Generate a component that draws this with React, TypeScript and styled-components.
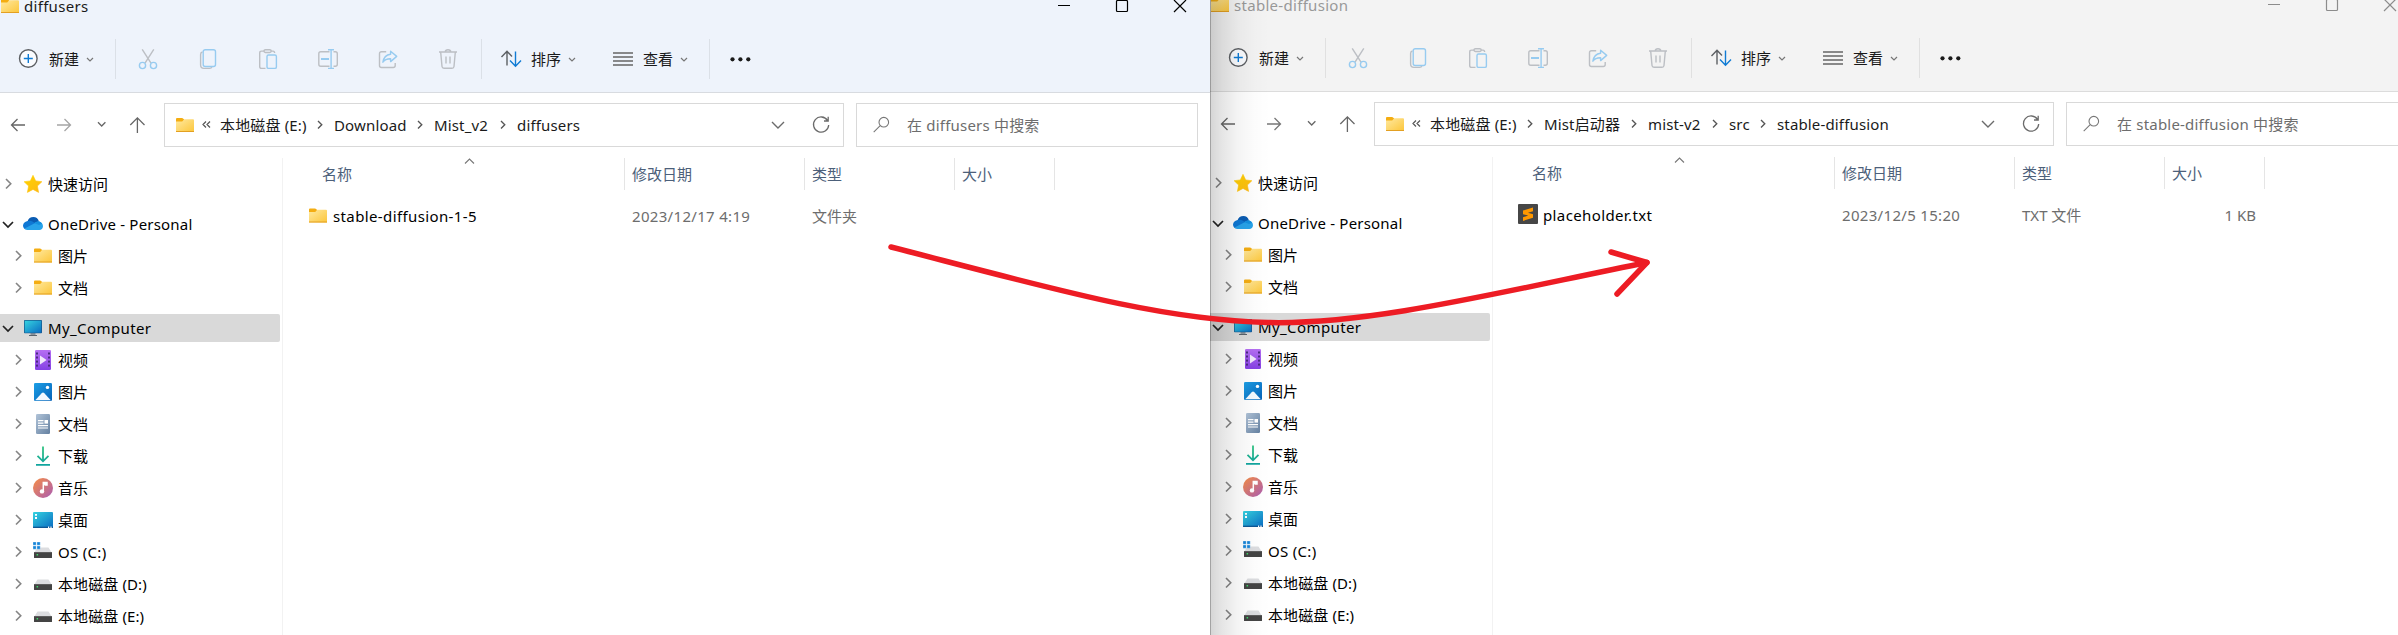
import React from "react";
import styled, { createGlobalStyle, css } from "styled-components";

const Global = createGlobalStyle`
  html, body { margin: 0; height: 635px; overflow: hidden; background: #fff; }
  body { font-family: "Noto Sans", "Noto Sans CJK SC", sans-serif; font-size: 15px; line-height: 20px; color: #000; }
  svg { display: block; flex: none; overflow: visible; }
`;

const Desktop = styled.main`
  position: relative;
  display: flex;
  width: 2398px;
  height: 635px;
  overflow: hidden;
`;

const Window = styled.section<{ $active: boolean }>`
  position: relative;
  flex: none;
  display: flex;
  flex-direction: column;
  width: 1210px;
  height: ${(p) => (p.$active ? 635 : 636)}px;
  margin-top: ${(p) => (p.$active ? 0 : -1)}px;
  background: #fff;
`;

const Shade = styled.div`
  position: absolute;
  inset: 0 auto 0 0;
  width: 60px;
  pointer-events: none;
  background: linear-gradient(90deg, rgba(0,0,0,.36) 0, rgba(0,0,0,.36) 1px, rgba(0,0,0,.16) 1px, rgba(0,0,0,.1) 12px, rgba(0,0,0,.045) 28px, rgba(0,0,0,.012) 45px, transparent 60px);
`;

const Header = styled.header<{ $active: boolean }>`
  flex: none;
  box-sizing: border-box;
  height: 93px;
  border-bottom: 1px solid ${(p) => (p.$active ? "#d8dbe0" : "#dcdcdc")};
  background: ${(p) => (p.$active ? "#eef3fb" : "#f3f3f3")};
`;

const TitleBar = styled.div<{ $active: boolean }>`
  display: flex;
  align-items: center;
  height: 12px;
  padding: 0 24px 0 1px;
  color: ${(p) => (p.$active ? "#1a1a1a" : "#999")};
`;

const Title = styled.span`
  flex: 1;
  margin-left: 5px;
  line-height: 12px;
  letter-spacing: 0.3px;
`;

const Controls = styled.div<{ $active: boolean }>`
  display: flex;
  gap: 46px;
  color: ${(p) => (p.$active ? "#000" : "#8c8c8c")};
`;

const Toolbar = styled.div`
  display: flex;
  align-items: center;
  height: 66px;
  padding: 14px 0 0 18px;
`;

const ToolGroup = styled.div<{ $gap: number; $ml: number }>`
  display: flex;
  align-items: center;
  gap: ${(p) => p.$gap}px;
  margin-left: ${(p) => p.$ml}px;
`;

const ToolLabel = styled.span`
  width: 30px;
  margin-right: 8px;
  color: #1a1a1a;
`;

const Divider = styled.i<{ $ml: number }>`
  width: 1px;
  height: 40px;
  margin-left: ${(p) => p.$ml}px;
  background: rgba(0, 0, 0, 0.08);
`;

const NavRow = styled.nav`
  display: flex;
  flex: none;
  align-items: center;
  height: 64px;
`;

const NavArrows = styled.div`
  display: grid;
  grid-template-columns: 46px 37px 36px 45px;
  align-items: center;
  width: 154px;
  padding-left: 10px;
  color: #666;
`;

const Field = styled.div<{ $w: number; $ml: number }>`
  box-sizing: border-box;
  display: flex;
  align-items: center;
  flex: none;
  width: ${(p) => p.$w}px;
  height: 44px;
  margin-left: ${(p) => p.$ml}px;
  border: 1px solid #d9d9d9;
  background: #fff;
`;

const Crumbs = styled.div`
  display: flex;
  align-items: center;
  flex: 1;
  padding-left: 11px;
  color: #1a1a1a;
`;

const Crumb = styled.span<{ $w: number }>`
  width: ${(p) => p.$w}px;
  letter-spacing: 0.15px;
  white-space: nowrap;
`;

const CrumbArrow = styled.span`
  display: flex;
  justify-content: center;
  width: 28px;
`;

const FieldActions = styled.div`
  display: flex;
  align-items: center;
  gap: 28px;
  padding-right: 13px;
  color: #6b6b6b;
`;

const SearchIcon = styled.svg`
  margin-left: 16px;
`;

const SearchHint = styled.span`
  margin-left: 18px;
  letter-spacing: 0.2px;
  color: #6d6d6d;
`;

const Body = styled.div`
  display: flex;
  flex: 1;
  min-height: 0;
  margin-top: 1px;
`;

const Tree = styled.aside`
  box-sizing: border-box;
  flex: none;
  width: 283px;
  padding-top: 10px;
  border-right: 1px solid #f2f2f2;
`;

const TreeRow = styled.div<{ $level: number; $selected?: boolean; $spaced?: boolean }>`
  display: flex;
  align-items: center;
  box-sizing: border-box;
  width: 280px;
  height: 32px;
  padding-left: ${(p) => p.$level * 10}px;
  margin-top: ${(p) => (p.$spaced ? 8 : 0)}px;
  white-space: nowrap;
  ${(p) =>
    p.$selected &&
    css`
      height: 28px;
      margin: 10px 0 2px;
      border-radius: 0 2px 2px 0;
      background: #d9d9d9;
    `}
`;

const Twisty = styled.span`
  display: flex;
  justify-content: center;
  width: 16px;
  margin-right: 7px;
`;

const TreeLabel = styled.span<{ $tracking: number }>`
  margin-left: 5px;
  letter-spacing: ${(p) => p.$tracking}px;
`;

const Files = styled.div`
  flex: 1;
`;

const columns = css`
  display: grid;
  grid-template-columns: 342px 180px 150px 100px;
`;

const ColumnHeads = styled.div`
  ${columns}
  height: 32px;
  color: #4c607a;
`;

const ColumnHead = styled.div<{ $first?: boolean }>`
  position: relative;
  box-sizing: border-box;
  padding: 6px 0 0 ${(p) => (p.$first ? 39 : 7)}px;
  border-right: 1px solid #e5e5e5;
`;

const SortMark = styled.span`
  position: absolute;
  left: 182px;
  top: 1px;
  color: #777;
`;

const FileRow = styled.div`
  ${columns}
  align-items: center;
  height: 32px;
  margin-top: 10px;
  color: #6d6d6d;
`;

const FileName = styled.div`
  display: flex;
  align-items: center;
  padding-left: 25px;
  color: #000;
`;

const NameText = styled.span`
  margin-left: 5px;
  letter-spacing: 0.38px;
`;

const Cell = styled.div<{ $right?: boolean }>`
  padding: 0 ${(p) => (p.$right ? 9 : 0)}px 0 7px;
  text-align: ${(p) => (p.$right ? "right" : "left")};
`;

const DateText = styled.span`
  letter-spacing: 0.32px;
`;

const Annotation = styled.svg`
  position: absolute;
  inset: 0;
`;

const Hidden = styled.svg`
  position: absolute;
`;

type ChevronProps = { dir: "down" | "right" | "up"; w: number; color: string; sw?: number };
const Chevron = ({ dir, w, color, sw = 1.4 }: ChevronProps) => {
  const h = w / 2;
  const d = dir === "down" ? `M0 0L${h} ${h}L${w} 0` : dir === "up" ? `M0 ${h}L${h} 0L${w} ${h}` : `M0 0L${h} ${h}L0 ${w}`;
  return (
    <svg width={dir === "right" ? h : w} height={dir === "right" ? w : h} fill="none" stroke={color} strokeWidth={sw}>
      <path d={d} />
    </svg>
  );
};

const Defs = () => (
  <Hidden width="0" height="0">
    <defs>
      <linearGradient id="folder" x1="0" y1="0" x2="1" y2="1"><stop offset="0" stopColor="#ffe9a0" /><stop offset="1" stopColor="#fcc63a" /></linearGradient>
      <linearGradient id="star" x1="0" y1="0" x2="1" y2="1"><stop offset="0" stopColor="#ffd400" /><stop offset="1" stopColor="#fdb714" /></linearGradient>
      <linearGradient id="screen" x1="0" y1="0" x2="1" y2="1"><stop offset="0" stopColor="#35d3e0" /><stop offset="1" stopColor="#0a6cc2" /></linearGradient>
      <linearGradient id="video" x1="0" y1="0" x2="0" y2="1"><stop offset="0" stopColor="#b56ff2" /><stop offset="1" stopColor="#8540e4" /></linearGradient>
      <linearGradient id="photo" x1="0" y1="0" x2="1" y2="1"><stop offset="0" stopColor="#1c9fe6" /><stop offset="1" stopColor="#0662b8" /></linearGradient>
      <linearGradient id="doc" x1="0" y1="0" x2="1" y2="1"><stop offset="0" stopColor="#b0c3d8" /><stop offset="1" stopColor="#6480a0" /></linearGradient>
      <linearGradient id="music" x1="0" y1="0" x2="1" y2="1"><stop offset=".1" stopColor="#f0894f" /><stop offset="1" stopColor="#a95cb4" /></linearGradient>
      <linearGradient id="down" x1="0" y1="0" x2="0" y2="20" gradientUnits="userSpaceOnUse"><stop offset="0" stopColor="#33c481" /><stop offset="1" stopColor="#0fa3a0" /></linearGradient>
    </defs>
  </Hidden>
);

const Folder = () => (
  <svg width="18" height="14">
    <path d="M0 1Q0 0 1 0H6.2L8 1.2V4H0Z" fill="#f4ad12" />
    <path d="M0 3.6H6.2L8.2 1.3H17Q18 1.3 18 2.2V14H0Z" fill="url(#folder)" />
    <path d="M0 13.5H18" stroke="#e3a022" />
  </svg>
);

type IconName = "star" | "cloud" | "folder" | "pc" | "video" | "photo" | "doc" | "download" | "music" | "desktop" | "os" | "drive";

const DriveBody = () => (
  <>
    <path d="M4.5 5.5H15.5L19 11H1Z" fill="#dcdde0" />
    <rect x="1" y="10" width="18" height="6" rx=".6" fill="#444" />
    <rect x="1" y="10" width="18" height="1" fill="#5d5d5d" />
    <rect x="3.6" y="12" width="1.5" height="1.5" fill="#42d66b" />
  </>
);

const glyphs: Record<IconName, React.ReactNode> = {
  star: <path d="M10 1.3L12.7 6.9L18.9 7.7L14.4 12L15.6 18.4L10 15.4L4.4 18.4L5.6 12L1.1 7.7L7.3 6.9Z" fill="url(#star)" stroke="url(#star)" strokeWidth=".6" strokeLinejoin="round" />,
  cloud: (
    <>
      <path d="M4.4 7.4Q6 3 10.4 3Q14.5 3 16 7.4L11 11L4 8Z" fill="#0a5cb3" />
      <path d="M5.2 7Q8.4 6.2 11 8.6L13.5 11L3 15.5Q0 14.3 0 11.4Q.4 7.6 5.2 7Z" fill="#0f78d4" />
      <path d="M11.6 9.2Q13.3 6.8 16.2 7.6Q19.8 8.6 20 12.2Q19.6 16 16.3 16H4.3Q2.6 16 1.6 14.6Z" fill="#28a3ea" />
      <path d="M10.9 9L13 8L16.3 7.6Q18 8 19 9.7L16 11Z" fill="#1490df" />
    </>
  ),
  folder: <g transform="translate(1 2.5)"><path d="M0 1Q0 0 1 0H6.2L8 1.2V4H0Z" fill="#f4ad12" /><path d="M0 3.6H6.2L8.2 1.3H17Q18 1.3 18 2.2V14H0Z" fill="url(#folder)" /><path d="M0 13.5H18" stroke="#e3a022" /></g>,
  pc: (
    <>
      <rect x="7.5" y="15" width="5" height="2" fill="#8b949c" />
      <rect x="6" y="17" width="8" height="1" fill="#59636c" />
      <rect x="1" y="2" width="18" height="13.3" rx=".8" fill="#17568a" />
      <rect x="1.7" y="2.7" width="16.6" height="12" fill="url(#screen)" />
    </>
  ),
  video: (
    <>
      <rect x="2" width="16" height="20" rx="1.3" fill="url(#video)" />
      {[2.5, 6.5, 10.6, 14.6].map((y) => (
        <g key={y} fill="#4b2b80"><rect x="3" y={y} width="2" height="2" /><rect x="15" y={y} width="2" height="2" /></g>
      ))}
      <path d="M7 5.4L13.6 10L7 14.6Z" fill="#f0e6fb" />
    </>
  ),
  photo: (
    <>
      <rect x="1" y="1" width="18" height="18" rx="1.3" fill="url(#photo)" />
      <path d="M2.2 18.2L8.7 11.2Q10 10 11.3 11.2L17.8 18.2Z" fill="#f3f9ff" />
      <circle cx="14.5" cy="5.4" r="1.7" fill="#fff" />
    </>
  ),
  doc: (
    <>
      <rect x="3" width="14" height="20" rx="1.3" fill="url(#doc)" />
      <path d="M5 6.6H10.5M5 9.1H10.5M5 11.6H15M5 14H15" stroke="#fff" strokeWidth="1.1" />
      <rect x="11.5" y="6" width="3.5" height="3.6" fill="#fff" />
    </>
  ),
  download: <path d="M10 .5V15M4.5 9.8L10 15.3L15.5 9.8M3 18.8H17" fill="none" stroke="url(#down)" strokeWidth="1.8" />,
  music: (
    <>
      <circle cx="10" cy="10" r="10" fill="url(#music)" />
      <path d="M10.3 13.4V4.5H14V7H11.5" fill="none" stroke="#fff" strokeWidth="1.5" />
      <path d="M10 4H14V7H10Z" fill="#fff" />
      <circle cx="9" cy="13.4" r="2.2" fill="#fff" />
    </>
  ),
  desktop: (
    <>
      <rect y="2" width="20" height="16" rx="1" fill="url(#screen)" />
      <path d="M0 17.3H20" stroke="#0d528f" strokeWidth="1.2" />
      <path d="M2 4.8H4M2 8H4M15 17.3H16.2M17.4 17.3H18.6" stroke="#fff" strokeWidth="1.8" />
    </>
  ),
  os: (
    <g>
      <DriveBody />
      <path d="M0 0H3.2V3.2H0ZM4 0H7.2V3.2H4ZM0 4H3.2V7.2H0ZM4 4H7.2V7.2H4Z" fill="#1584d8" stroke="#fff" strokeWidth=".3" />
    </g>
  ),
  drive: <DriveBody />,
};

const Icon = ({ name }: { name: IconName }) => <svg width="20" height="20">{glyphs[name]}</svg>;

const Sublime = () => (
  <svg width="20" height="20">
    <rect y="-1" width="20" height="20" rx="1" fill="#464646" />
    <path d="M5 5.6L15 2.6V6.2L10 7.8L15 9.3V12.8L5 15.9V12.3L10.2 10.6L5 9.2Z" fill="#ff9800" />
  </svg>
);

const gray = "#bcbfc4";
const blue = "#97cbf0";
const line = { width: 20, height: 20, fill: "none", strokeWidth: 1.4 };

const EditTools = () => (
  <ToolGroup $gap={40} $ml={22}>
    <svg {...line}>
      <path d="M4.2 .3L13 14.2M15.8 .3L7 14.2" stroke={gray} />
      <circle cx="4.5" cy="16.5" r="3.1" stroke={blue} /><circle cx="15.5" cy="16.5" r="3.1" stroke={blue} />
    </svg>
    <svg {...line}>
      <path d="M4.5 3Q2.6 3.4 2.6 5.5V16Q2.6 19.4 6 19.4H11.5Q13.5 19.4 14 17.6" stroke={gray} />
      <rect x="5.2" y=".7" width="12.3" height="16.8" rx="2" stroke={blue} />
    </svg>
    <svg {...line}>
      <path d="M6 2.1H3.6Q1.7 2.1 1.7 4V17.5Q1.7 19.4 3.6 19.4H7.5M13 2.1H15Q16.6 2.1 16.6 4" stroke={gray} />
      <rect x="6" y=".7" width="7.2" height="2.8" rx="1.4" stroke={gray} />
      <rect x="9" y="6" width="9.4" height="13.4" rx="1.5" stroke={blue} />
    </svg>
    <svg {...line}>
      <path d="M11.5 2.8H2.7Q.8 2.8 .8 4.7V15.3Q.8 17.2 2.7 17.2H11.5M15.5 2.8H17.3Q19.3 2.8 19.3 4.7V15.3Q19.3 17.2 17.3 17.2H15.5" stroke={gray} />
      <path d="M10 .7H16M10 19.4H16M13.1 .7V19.4" stroke={blue} /><path d="M3 10H11" stroke={blue} strokeWidth="2" />
    </svg>
    <svg {...line}>
      <path d="M8.2 2.8H3.5Q1.5 2.8 1.5 4.8V16.5Q1.5 18.5 3.5 18.5H15.2Q17.2 18.5 17.2 16.5V14" stroke={gray} />
      <path d="M12.6 2.2L18.7 7.4L12.6 12.6V9.8Q7.5 9.6 4.9 13.2Q6 5.9 12.6 5.2Z" stroke={blue} strokeLinejoin="round" />
    </svg>
    <svg {...line} stroke={gray}>
      <path d="M1 3H19M7.2 3Q7.4 .8 10 .8Q12.6 .8 12.8 3M2.7 3.2L4 17.5Q4.2 19.3 6 19.3H14Q15.8 19.3 16 17.5L17.3 3.2M8 7.6V14.5M12 7.6V14.5" />
    </svg>
  </ToolGroup>
);

type Item = { icon: IconName; label: string; level: number; open?: boolean; spaced?: boolean; selected?: boolean; tracking?: number };
const tree: Item[] = [
  { icon: "star", label: "快速访问", level: 0 },
  { icon: "cloud", label: "OneDrive - Personal", level: 0, open: true, spaced: true, tracking: 0.2 },
  { icon: "folder", label: "图片", level: 1 },
  { icon: "folder", label: "文档", level: 1 },
  { icon: "pc", label: "My_Computer", level: 0, open: true, selected: true, tracking: 0.4 },
  { icon: "video", label: "视频", level: 1 },
  { icon: "photo", label: "图片", level: 1 },
  { icon: "doc", label: "文档", level: 1 },
  { icon: "download", label: "下载", level: 1 },
  { icon: "music", label: "音乐", level: 1 },
  { icon: "desktop", label: "桌面", level: 1 },
  { icon: "os", label: "OS (C:)", level: 1, tracking: 0.3 },
  { icon: "drive", label: "本地磁盘 (D:)", level: 1, tracking: 0.1 },
  { icon: "drive", label: "本地磁盘 (E:)", level: 1, tracking: 0.1 },
];

type Props = {
  title: string;
  active: boolean;
  crumbs: [string, number][];
  file: { icon: React.ReactNode; name: string; date: string; type: string; size: string };
};

const Explorer = ({ title, active, crumbs, file }: Props) => (
  <Window $active={active}>
    <Header $active={active}>
      <TitleBar $active={active}>
        <Folder />
        <Title>{title}</Title>
        <Controls $active={active}>
          <svg width="12" height="12" stroke="currentColor"><path d="M0 5.5H12" /></svg>
          <svg width="12" height="12" stroke="currentColor" fill="none" strokeWidth="1.2"><rect x=".5" y=".5" width="11" height="11" rx="1" /></svg>
          <svg width="12" height="12" stroke="currentColor" strokeWidth="1.2"><path d="M0 0L12 12M12 0L0 12" /></svg>
        </Controls>
      </TitleBar>
      <Toolbar>
        <svg {...line}><circle cx="10.3" cy="9.5" r="8.8" stroke="#5c5f63" fill="#fafcff" /><path d="M10.3 5V14M5.8 9.5H14.8" stroke="#0f7bd4" /></svg>
        <ToolGroup $gap={0} $ml={11}><ToolLabel>新建</ToolLabel><Chevron dir="down" w={6} color="#777" sw={1.2} /></ToolGroup>
        <Divider $ml={22} />
        <EditTools />
        <Divider $ml={23} />
        <ToolGroup $gap={0} $ml={19}>
          <svg {...line}><path d="M6 16.5V2.5M.5 8L6 2.3L11 7.5" stroke="#5c5f63" /><path d="M14.5 2.5V17M9 11.5L14.5 17.2L20 11.5" stroke="#0f7bd4" /></svg>
        </ToolGroup>
        <ToolGroup $gap={0} $ml={10}><ToolLabel>排序</ToolLabel><Chevron dir="down" w={6} color="#777" sw={1.2} /></ToolGroup>
        <ToolGroup $gap={0} $ml={38}>
          <svg {...line} stroke="#666"><path d="M0 4H20M0 8H20M0 12H20M0 16H20" /></svg>
        </ToolGroup>
        <ToolGroup $gap={0} $ml={10}><ToolLabel>查看</ToolLabel><Chevron dir="down" w={6} color="#777" sw={1.2} /></ToolGroup>
        <Divider $ml={22} />
        <ToolGroup $gap={0} $ml={20}>
          <svg width="21" height="4" fill="#1a1a1a"><circle cx="2.5" cy="2.3" r="2.1" /><circle cx="10.4" cy="2.3" r="2.1" /><circle cx="18.3" cy="2.3" r="2.1" /></svg>
        </ToolGroup>
      </Toolbar>
    </Header>
    <NavRow>
      <NavArrows>
        <svg width="16" height="16" fill="none" stroke="#666" strokeWidth="1.3"><path d="M15 8H1.5M7.5 2L1.5 8L7.5 14" /></svg>
        <svg width="16" height="16" fill="none" stroke={active ? "#a5a5a5" : "#777"} strokeWidth="1.3"><path d="M1 8H14.5M8.5 2L14.5 8L8.5 14" /></svg>
        <svg width="16" height="16" fill="none" stroke="#666" strokeWidth="1.3"><path d="M5 5.3L8.7 9L12.4 5.3" /></svg>
        <svg width="16" height="16" fill="none" stroke="#666" strokeWidth="1.3"><path d="M8.4 16V1M1.3 8L8.4 .9L15.5 8" /></svg>
      </NavArrows>
      <Field $w={680} $ml={0}>
        <Crumbs>
          <Folder />
          <svg width="26" height="16" fill="none" stroke="#555" strokeWidth="1.2"><path d="M12 4.5L9 7.5L12 10.5M16 4.5L13 7.5L16 10.5" /></svg>
          {crumbs.map(([label, w], i) => (
            <React.Fragment key={label}>
              {i > 0 && <CrumbArrow><Chevron dir="right" w={7.5} color="#555" /></CrumbArrow>}
              <Crumb $w={w}>{label}</Crumb>
            </React.Fragment>
          ))}
        </Crumbs>
        <FieldActions>
          <Chevron dir="down" w={12} color="#6b6b6b" />
          <svg width="18" height="18" fill="none" stroke="#6b6b6b" strokeWidth="1.3"><path d="M15.6 4.6A7.6 7.6 0 1 0 16.7 9M16.2 .8V5H12" /></svg>
        </FieldActions>
      </Field>
      <Field $w={342} $ml={12}>
        <SearchIcon width="16" height="16" fill="none" stroke="#777" strokeWidth="1.1"><circle cx="10.8" cy="5.2" r="4.8" /><path d="M7.2 8.7L.7 15.2" /></SearchIcon>
        <SearchHint>在 {title} 中搜索</SearchHint>
      </Field>
    </NavRow>
    <Body>
      <Tree>
        {tree.map((t, i) => (
          <TreeRow key={i} $level={t.level} $selected={t.selected} $spaced={t.spaced}>
            <Twisty>{t.open ? <Chevron dir="down" w={10} color="#222" sw={1.7} /> : <Chevron dir="right" w={9.5} color="#858585" sw={1.6} />}</Twisty>
            <Icon name={t.icon} />
            <TreeLabel $tracking={t.tracking ?? 0}>{t.label}</TreeLabel>
          </TreeRow>
        ))}
      </Tree>
      <Files>
        <ColumnHeads>
          <ColumnHead $first>名称<SortMark><Chevron dir="up" w={9} color="#777" sw={1.1} /></SortMark></ColumnHead>
          <ColumnHead>修改日期</ColumnHead>
          <ColumnHead>类型</ColumnHead>
          <ColumnHead>大小</ColumnHead>
        </ColumnHeads>
        <FileRow>
          <FileName>{file.icon}<NameText>{file.name}</NameText></FileName>
          <Cell><DateText>{file.date}</DateText></Cell>
          <Cell>{file.type}</Cell>
          <Cell $right>{file.size}</Cell>
        </FileRow>
      </Files>
    </Body>
    {!active && <Shade />}
  </Window>
);

export default function App() {
  return (
    <>
      <Global />
      <Defs />
      <Desktop>
        <Explorer
          title="diffusers"
          active
          crumbs={[["本地磁盘 (E:)", 86], ["Download", 72], ["Mist_v2", 55], ["diffusers", 62]]}
          file={{ icon: <Icon name="folder" />, name: "stable-diffusion-1-5", date: "2023/12/17 4:19", type: "文件夹", size: "" }}
        />
        <Explorer
          title="stable-diffusion"
          active={false}
          crumbs={[["本地磁盘 (E:)", 86], ["Mist启动器", 76], ["mist-v2", 53], ["src", 20], ["stable-diffusion", 113]]}
          file={{ icon: <Sublime />, name: "placeholder.txt", date: "2023/12/5 15:20", type: "TXT 文件", size: "1 KB" }}
        />
        <Annotation width="2398" height="635" fill="none" stroke="#ed1c24" strokeWidth="5.5" strokeLinecap="round" strokeLinejoin="round">
          <path d="M891 247C1050 288 1160 320 1268 322.5C1370 325 1500 292 1647 262.5" />
          <path d="M1611 252L1647 262.5L1617 294" />
        </Annotation>
      </Desktop>
    </>
  );
}
